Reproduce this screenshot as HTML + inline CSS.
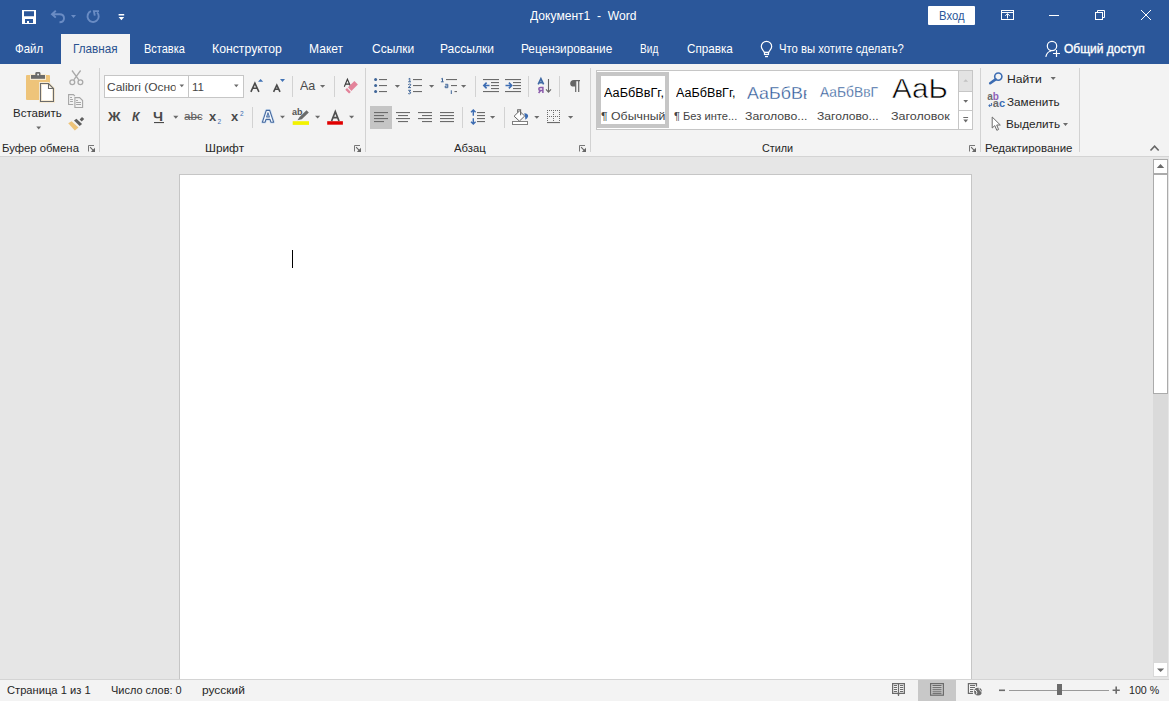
<!DOCTYPE html>
<html><head><meta charset="utf-8">
<style>
*{margin:0;padding:0;box-sizing:border-box}
html,body{width:1169px;height:701px;overflow:hidden;background:#e6e6e6;font-family:"Liberation Sans",sans-serif;position:relative}
.a{position:absolute}
.t{position:absolute;white-space:nowrap;line-height:1;font-size:11.5px;color:#333}
.w{color:#fff}
#ov{position:absolute;left:0;top:0;width:1169px;height:701px}
</style></head><body>
<!-- title bar -->
<div class="a" style="left:0;top:0;width:1169px;height:64px;background:#2b579a"></div>
<div class="a" style="left:61px;top:34px;width:69px;height:30px;background:#f3f3f3"></div>
<!-- ribbon -->
<div class="a" style="left:0;top:64px;width:1169px;height:92px;background:#f3f3f3"></div>
<div class="a" style="left:0;top:156px;width:1169px;height:1px;background:#d4d4d4"></div>
<!-- page -->
<div class="a" style="left:179px;top:174px;width:793px;height:520px;background:#fff;border:1px solid #c6c6c6"></div>
<div class="a" style="left:292px;top:250px;width:1px;height:18px;background:#000"></div>
<!-- scrollbar -->
<div class="a" style="left:1153px;top:394px;width:15px;height:268px;background:#dadada"></div>
<div class="a" style="left:1153px;top:159px;width:15px;height:15px;background:#fff;border:1px solid #ababab"></div>
<div class="a" style="left:1153px;top:174px;width:15px;height:220px;background:#fff;border:1px solid #ababab"></div>
<div class="a" style="left:1153px;top:662px;width:15px;height:15px;background:#fff;border:1px solid #d9d9d9"></div>
<!-- status bar -->
<div class="a" style="left:0;top:679px;width:1169px;height:1px;background:#d4d4d4"></div>
<div class="a" style="left:0;top:680px;width:1169px;height:21px;background:#f3f3f3"></div>
<div class="a" style="left:918px;top:680px;width:38px;height:21px;background:#c8c8c8"></div>

<!-- font boxes -->
<div class="a" style="left:104px;top:75px;width:85px;height:23px;background:#fff;border:1px solid #c6c6c6"></div>
<div class="a" style="left:188px;top:75px;width:56px;height:23px;background:#fff;border:1px solid #c6c6c6"></div>
<!-- align left selected -->
<div class="a" style="left:370px;top:106px;width:22px;height:23px;background:#c5c5c5"></div>
<!-- styles gallery -->
<div class="a" style="left:596px;top:70px;width:377px;height:60px;background:#fff;border:1px solid #c6c6c6"></div>
<div class="a" style="left:597px;top:72px;width:72px;height:56px;border:4px solid #c6c6c6"></div>
<div class="a" style="left:958px;top:71px;width:14px;height:21px;background:#e3e3e3;border-left:1px solid #c6c6c6"></div>
<div class="a" style="left:958px;top:91px;width:14px;height:20px;border-left:1px solid #c6c6c6;border-top:1px solid #c6c6c6"></div>
<div class="a" style="left:958px;top:110px;width:14px;height:19px;border-left:1px solid #c6c6c6;border-top:1px solid #c6c6c6"></div>

<div class="a" style="left:928px;top:6px;width:47px;height:19px;background:#fff;border-radius:1px"></div>
<div id="title" class="t" style="left:529.8px;top:9px;font-size:13px;color:#fff;transform:scaleX(0.9298);transform-origin:0 0">Документ1&nbsp;&nbsp;-&nbsp;&nbsp;Word</div>
<div id="vhod" class="t" style="left:938.65px;top:10px;font-size:12px;color:#2b579a;transform:scaleX(0.9395);transform-origin:0 0">Вход</div>
<div id="tab0" class="t" style="left:15.48px;top:41.5px;font-size:13px;color:#fff;transform:scaleX(0.8788);transform-origin:0 0">Файл</div>
<div id="tab1" class="t" style="left:72.69px;top:41.5px;font-size:13px;color:#29528f;transform:scaleX(0.9002);transform-origin:0 0">Главная</div>
<div id="tab2" class="t" style="left:144.33px;top:41.5px;font-size:13px;color:#fff;transform:scaleX(0.8462);transform-origin:0 0">Вставка</div>
<div id="tab3" class="t" style="left:212.05px;top:41.5px;font-size:13px;color:#fff;transform:scaleX(0.9427);transform-origin:0 0">Конструктор</div>
<div id="tab4" class="t" style="left:309.05px;top:41.5px;font-size:13px;color:#fff;transform:scaleX(0.9282);transform-origin:0 0">Макет</div>
<div id="tab5" class="t" style="left:371.6px;top:41.5px;font-size:13px;color:#fff;transform:scaleX(0.9248);transform-origin:0 0">Ссылки</div>
<div id="tab6" class="t" style="left:440.49px;top:41.5px;font-size:13px;color:#fff;transform:scaleX(0.9232);transform-origin:0 0">Рассылки</div>
<div id="tab7" class="t" style="left:521.29px;top:41.5px;font-size:13px;color:#fff;transform:scaleX(0.9091);transform-origin:0 0">Рецензирование</div>
<div id="tab8" class="t" style="left:640.37px;top:41.5px;font-size:13px;color:#fff;transform:scaleX(0.7775);transform-origin:0 0">Вид</div>
<div id="tab9" class="t" style="left:687.2px;top:41.5px;font-size:13px;color:#fff;transform:scaleX(0.8981);transform-origin:0 0">Справка</div>
<div id="tell" class="t" style="left:778.93px;top:41.5px;font-size:13px;color:#fff;transform:scaleX(0.8685);transform-origin:0 0">Что вы хотите сделать?</div>
<div id="share" class="t" style="left:1064.2px;top:41.5px;font-size:13px;color:#fff;transform:scaleX(0.9234);transform-origin:0 0;-webkit-text-stroke:0.35px #fff">Общий доступ</div>
<div id="g1" class="t" style="left:2.41px;top:143px;font-size:11.5px;color:#262626;transform:scaleX(0.9844);transform-origin:0 0">Буфер обмена</div>
<div id="g2" class="t" style="left:204.96px;top:143px;font-size:11.5px;color:#262626;transform:scaleX(1.0327);transform-origin:0 0">Шрифт</div>
<div id="g3" class="t" style="left:453.6px;top:143px;font-size:11.5px;color:#262626;transform:scaleX(0.9814);transform-origin:0 0">Абзац</div>
<div id="g4" class="t" style="left:761.82px;top:143px;font-size:11.5px;color:#262626;transform:scaleX(0.9400);transform-origin:0 0">Стили</div>
<div id="g5" class="t" style="left:985.41px;top:143px;font-size:11.5px;color:#262626;transform:scaleX(0.9979);transform-origin:0 0">Редактирование</div>
<div id="paste" class="t" style="left:13.4px;top:107.5px;font-size:11.5px;color:#262626;transform:scaleX(1.0003);transform-origin:0 0">Вставить</div>
<div id="find" class="t" style="left:1006.98px;top:74px;font-size:11.5px;color:#262626;transform:scaleX(1.0574);transform-origin:0 0">Найти</div>
<div id="repl" class="t" style="left:1007.0px;top:96.5px;font-size:11.5px;color:#262626;transform:scaleX(1.0195);transform-origin:0 0">Заменить</div>
<div id="sel" class="t" style="left:1005.99px;top:119px;font-size:11.5px;color:#262626;transform:scaleX(1.0195);transform-origin:0 0">Выделить</div>
<div id="fname" class="t" style="left:107px;top:81.5px;font-size:11.5px;color:#444;transform:scaleX(1.0400);transform-origin:0 0;width:65.5px;overflow:hidden">Calibri (Осно</div>
<div id="fsize" class="t" style="left:192px;top:81.5px;font-size:11.5px;color:#444">11</div>
<div id="st1" class="t" style="left:603.5px;top:86.5px;font-size:12.5px;color:#000;transform:scaleX(1.0156);transform-origin:0 0">АаБбВвГг,</div>
<div id="st2" class="t" style="left:676.0px;top:86.5px;font-size:12.5px;color:#000;transform:scaleX(1.0072);transform-origin:0 0">АаБбВвГг,</div>
<div id="st3" class="t" style="left:747px;top:84.5px;font-size:16.5px;color:#2b5797;transform:scaleX(1.0800);transform-origin:0 0;width:54.6px;overflow:hidden;-webkit-text-stroke:0.3px #fff">АаБбВвГг</div>
<div id="st4" class="t" style="left:819.51px;top:85px;font-size:14.5px;color:#2b5797;transform:scaleX(0.9505);transform-origin:0 0;-webkit-text-stroke:0.3px #fff">АаБбВвГ</div>
<div id="st5" class="t" style="left:891.9px;top:75px;font-size:28px;color:#000;transform:scaleX(1.0539);transform-origin:0 0;-webkit-text-stroke:0.6px #fff">АаЬ</div>
<div id="sl1" class="t" style="left:601.16px;top:111px;font-size:11.5px;color:#444;transform:scaleX(1.0695);transform-origin:0 0">¶ Обычный</div>
<div id="sl2" class="t" style="left:673.59px;top:111px;font-size:11.5px;color:#444;transform:scaleX(0.9663);transform-origin:0 0">¶ Без инте...</div>
<div id="sl3" class="t" style="left:744.96px;top:111px;font-size:11.5px;color:#444;transform:scaleX(1.0662);transform-origin:0 0">Заголово...</div>
<div id="sl4" class="t" style="left:816.98px;top:111px;font-size:11.5px;color:#444;transform:scaleX(1.0520);transform-origin:0 0">Заголово...</div>
<div id="sl5" class="t" style="left:890.99px;top:111px;font-size:11.5px;color:#444;transform:scaleX(1.0856);transform-origin:0 0">Заголовок</div>
<div id="s1" class="t" style="left:7.0px;top:685px;font-size:11.5px;color:#262626;transform:scaleX(0.9699);transform-origin:0 0">Страница 1 из 1</div>
<div id="s2" class="t" style="left:111.26px;top:685px;font-size:11.5px;color:#262626;transform:scaleX(0.9537);transform-origin:0 0">Число слов: 0</div>
<div id="s3" class="t" style="left:202.16px;top:685px;font-size:11.5px;color:#262626;transform:scaleX(1.0400);transform-origin:0 0">русский</div>
<div id="s4" class="t" style="left:1129.48px;top:685px;font-size:11.5px;color:#262626;transform:scaleX(0.9263);transform-origin:0 0">100 %</div>
<div id="bold" class="t" style="left:108.4px;top:109.5px;font-size:13px;color:#4a4a4a;font-weight:bold;transform:scaleX(1.0705);transform-origin:0 0">Ж</div>
<div id="ital" class="t" style="left:131.61px;top:109.5px;font-size:13px;color:#4a4a4a;font-weight:bold;font-style:italic;transform:scaleX(0.9421);transform-origin:0 0">К</div>
<div id="und" class="t" style="left:153.49px;top:109.5px;font-size:13px;color:#4a4a4a;font-weight:bold;transform:scaleX(1.0999);transform-origin:0 0">Ч</div>
<div id="abc" class="t" style="left:183.98px;top:111px;font-size:11px;color:#5a5a5a;transform:scaleX(1.0563);transform-origin:0 0">abc</div>
<div id="sub" class="t" style="left:209px;top:109.5px;font-size:13px;color:#4a4a4a;font-weight:bold">x</div>
<div id="sub2" class="t" style="left:217.5px;top:118.5px;font-size:6.5px;color:#3c6cb2">2</div>
<div id="sup" class="t" style="left:231px;top:109.5px;font-size:13px;color:#4a4a4a;font-weight:bold">x</div>
<div id="sup2" class="t" style="left:240px;top:110.5px;font-size:6.5px;color:#3c6cb2">2</div>
<div id="aa" class="t" style="left:300.0px;top:79px;font-size:13px;color:#4a4a4a;transform:scaleX(0.9649);transform-origin:0 0">Aa</div>
<div id="hab" class="t" style="left:292px;top:108px;font-size:9px;color:#555;font-weight:bold">ab</div>
<div id="rab" class="t" style="left:987.3px;top:92px;font-size:10px;color:#6b6b6b;font-weight:bold">a<span style="color:#8e5fb8">b</span></div>
<div id="rac" class="t" style="left:992.8px;top:98.3px;font-size:11px;color:#6b6b6b;font-weight:bold">a<span style="color:#3c6cb2">c</span></div>
<svg id="ov" width="1169" height="701" viewBox="0 0 1169 701">
<!-- QAT -->
<path fill="#fff" fill-rule="evenodd" d="M22,10h14v14h-14z M24,11.3h10v5h-10z M25,19h8v4h-4v-2h-2v2h-2z"/>
<g stroke="#6a8cc4" stroke-width="1.9" fill="none">
<path d="M55.8,10.8 L52,14.2 L55.8,17.6 M52.2,14.2 H59.5 C62.6,14.2 64,16 64,18.3 C64,20.6 62.4,22.3 59.5,22.3"/>
<path d="M90.9,11.2 A5.6,5.6 0 1 0 97.1,12.4"/>
<path d="M99,11.1 H93.9 L94.8,15.6"/>
</g>
<path fill="#6a8cc4" d="M71,15h5l-2.5,3z"/>
<path fill="#fff" d="M118.6,14.1h5.6v1.3h-5.6z M118.6,17.1h5.6l-2.8,3.1z"/>
<!-- window controls -->
<g stroke="#fff" stroke-width="1" fill="none">
<rect x="1001.5" y="10.5" width="12" height="9"/>
<path d="M1002,12.5H1013 M1007.5,18.5V13.8 M1005.3,15.8L1007.5,13.6L1009.7,15.8"/>
<path d="M1049,15.5H1059"/>
<rect x="1095.5" y="12.5" width="7" height="7"/>
<path d="M1097.5,12V10.5H1104.5V17.5H1103"/>
<path d="M1141,10L1151,20M1151,10L1141,20"/>
</g>
<!-- tell me bulb -->
<g stroke="#fff" stroke-width="1.2" fill="none">
<path d="M764.3,52.3 C763.3,50.3 761.3,49 761.3,46.5 A5.2,5.2 0 0 1 771.7,46.5 C771.7,49 769.7,50.3 768.7,52.3 Z"/>
<rect x="764.5" y="52.5" width="4" height="2"/>
<path d="M765,56.6H768"/>
<circle cx="1052" cy="46" r="4.7"/>
<path d="M1045.8,56.8 C1046.6,53.2 1049,51.3 1051.2,51"/>
<path d="M1053,53.5H1060 M1056.5,50V57"/>
</g>
<!-- paste -->
<rect x="26" y="75" width="24" height="25" rx="1" fill="#eec47a"/>
<rect x="30" y="74" width="16" height="6" fill="#f7ebd3"/>
<rect x="31" y="75" width="14" height="3.8" fill="#6b6b6b"/>
<rect x="35.3" y="72" width="5.2" height="4" rx="1.4" fill="#6b6b6b"/>
<rect x="37.3" y="73.7" width="1.6" height="1.6" fill="#fff"/>
<path d="M40.5,83.5 H48.5 L53.5,88.5 V101.5 H40.5 Z" fill="#fff" stroke="#f7ebd3" stroke-width="3"/>
<path d="M40.5,83.5 H48.5 L53.5,88.5 V101.5 H40.5 Z M48.5,83.5 V88.5 H53.5" fill="none" stroke="#6b6b6b" stroke-width="1.1"/>
<path fill="#6b6b6b" d="M36.3,126.6h4.8l-2.4,3z"/>
<!-- scissors -->
<g stroke="#a9a9a9" stroke-width="1.3" fill="none">
<circle cx="72.3" cy="82.2" r="2.4"/><circle cx="80.4" cy="82.2" r="2.4"/>
<path d="M72,70.5 L78.8,79.9 M80.6,70.5 L73.8,79.9"/>
</g>
<!-- copy -->
<g stroke="#a6a6a6" stroke-width="1.1" fill="none">
<path d="M73.2,104.5 H68.6 V94.6 H73.4 L74.9,96.1"/>
<path d="M70.1,97.5H72 M70.1,99.5H72.9 M70.1,101.5H72.9"/>
<path d="M74.9,107.5 V97.6 H79.6 L82.6,100.6 V107.5 Z"/>
<path d="M76.1,100.5H77.9 M76.1,102.5H81 M76.1,104.5H81"/>
</g>
<!-- brush -->
<path d="M79.6,119.4 L82,117 L84.2,118.9 L81.7,121.4 Z" fill="#5f5f5f"/>
<path d="M74,120.5 L76.4,118.8 L82.1,123.9 L79.7,125.9 Z" fill="#5f5f5f"/>
<path d="M68.2,123.2 L71.6,121.3 L78.5,127.4 L74.8,130.4 Z" fill="#eec47a"/>
<!-- font boxes arrows -->
<path fill="#6b6b6b" d="M179.5,84.5h4.6l-2.3,2.8z M234,84.5h4.6l-2.3,2.8z"/>
<!-- grow/shrink -->
<path fill="#4273b5" d="M258,81.8h5.2l-2.6,-2.9z M280,79h5l-2.5,2.9z"/>
<g stroke="#4a4a4a" stroke-width="1.6" fill="none">
<path d="M250.9,91.8 L254.9,83.2 L258.9,91.8 M252.5,88.2 H257.3"/>
<path d="M273.6,91.8 L276.8,85.2 L280,91.8 M274.9,89.2 H278.7"/>
</g>
<path fill="#6b6b6b" d="M320,85h5.2l-2.6,2.8z"/>
<!-- separators -->
<g fill="#d2d2d2">
<rect x="99" y="68" width="1" height="84"/>
<rect x="365" y="68" width="1" height="84"/>
<rect x="590" y="68" width="1" height="84"/>
<rect x="980" y="68" width="1" height="84"/>
<rect x="1079" y="68" width="1" height="84"/>
<rect x="292" y="76" width="1" height="21"/>
<rect x="334" y="76" width="1" height="21"/>
<rect x="252" y="107" width="1" height="21"/>
<rect x="475" y="76" width="1" height="21"/>
<rect x="528" y="76" width="1" height="21"/>
<rect x="559" y="76" width="1" height="21"/>
<rect x="462" y="107" width="1" height="21"/>
<rect x="504" y="107" width="1" height="21"/>
</g>
<!-- dialog launchers -->
<path d="M88.5,151.5 V145.5 H94.0" stroke="#777" stroke-width="1" fill="none"/>
<path d="M90.1,147.2 L93.7,150.8" stroke="#666" stroke-width="1.1"/>
<path d="M95.0,147.8 V152 H90.8 Z" fill="#666"/>
<path d="M354.5,151.5 V145.5 H360.0" stroke="#777" stroke-width="1" fill="none"/>
<path d="M356.1,147.2 L359.7,150.8" stroke="#666" stroke-width="1.1"/>
<path d="M361.0,147.8 V152 H356.8 Z" fill="#666"/>
<path d="M579.5,151.5 V145.5 H585.0" stroke="#777" stroke-width="1" fill="none"/>
<path d="M581.1,147.2 L584.7,150.8" stroke="#666" stroke-width="1.1"/>
<path d="M586.0,147.8 V152 H581.8 Z" fill="#666"/>
<path d="M969.5,151.5 V145.5 H975.0" stroke="#777" stroke-width="1" fill="none"/>
<path d="M971.1,147.2 L974.7,150.8" stroke="#666" stroke-width="1.1"/>
<path d="M976.0,147.8 V152 H971.8 Z" fill="#666"/>
<!-- row2 font -->
<path fill="#6b6b6b" d="M173.2,115.8h5.2l-2.6,2.9z M280,115.8h5l-2.5,2.8z M315,115.8h5.2l-2.6,2.8z M349,115.8h5.2l-2.6,2.8z"/>
<rect x="154" y="122" width="10" height="1.1" fill="#4a4a4a"/>
<path d="M185,117.4H201.5" stroke="#5a5a5a" stroke-width="1"/>
<!-- text effects A -->
<path d="M262.4,122.2 L266.3,110.4 H269.7 L273.6,122.2 H270.9 L270,119.4 H266 L265.1,122.2 Z M266.7,117 H269.3 L268,112.8 Z" fill="none" stroke="#cfe0f3" stroke-width="2.6" stroke-linejoin="round"/>
<path d="M262.4,122.2 L266.3,110.4 H269.7 L273.6,122.2 H270.9 L270,119.4 H266 L265.1,122.2 Z M266.7,117 H269.3 L268,112.8 Z" fill="#f4f8fd" fill-rule="evenodd" stroke="#44679c" stroke-width="1.1" stroke-linejoin="round"/>
<path d="M266.9,116.6 H269.1 L268,113.3 Z" fill="#7d9fcc"/>
<!-- highlighter -->
<rect x="292.7" y="121.2" width="16.3" height="3.7" fill="#f2f200"/>
<path d="M297.5,120.3 L299.5,117 L306.5,110.3 L308.8,112.5 L301.8,119.3 Z" fill="#6b6b6b"/>
<!-- font color -->
<rect x="327.2" y="121.2" width="15.7" height="3.5" fill="#e00000"/>
<path d="M331.6,121 L335.3,111.6 L339,121 M332.9,117.6 H337.7" stroke="#505050" stroke-width="1.7" fill="none"/>
<!-- eraser -->
<path d="M344.3,86.7 L347.4,79.2 L350.4,86 M345.6,84.1 H349.4" stroke="#3a3a3a" stroke-width="1.1" fill="none"/>
<path d="M348,87.2 L354.4,81 L357.9,84.6 L351.4,90.9 Z" fill="#e3839a"/>
<path d="M345.3,89.8 L347,88.1 L350.8,91.9 L349.1,93.6 Z" fill="#e3839a"/>
<!-- bullets -->
<g fill="#3f6598">
<circle cx="375.6" cy="79.6" r="1.5"/><circle cx="375.6" cy="85.4" r="1.5"/><circle cx="375.6" cy="91.5" r="1.5"/>
</g>
<g fill="#6b6b6b">
<rect x="379" y="79" width="8" height="1.1"/><rect x="379" y="85" width="8" height="1.1"/><rect x="379" y="91" width="8" height="1.1"/>
<rect x="413" y="79" width="9" height="1.1"/><rect x="413" y="85" width="9" height="1.1"/><rect x="413" y="91" width="9" height="1.1"/>
<rect x="446" y="79" width="11" height="1.1"/><rect x="451" y="85" width="6" height="1.1"/><rect x="454.5" y="91" width="2.5" height="1.1"/>
</g>
<path fill="#6b6b6b" d="M394.8,85h5.2l-2.6,2.8z M429,85h5.2l-2.6,2.8z M461,85h5.2l-2.6,2.8z"/>
<g stroke="#3f6598" stroke-width="1" fill="none">
<path d="M408.5,79 L409.8,78.3 V81.8 M408.2,81.8H411"/>
<path d="M408.2,84.6 Q409.6,83.6 410.8,84.4 Q411,85.3 408.2,87.6 H411"/>
<path d="M408.2,90.3 H410.8 L409.2,91.8 Q411,92 410.8,93 Q410,94.3 408.2,93.6"/>
<path d="M441.2,79 L442.5,78.3 V81.8 M440.9,81.8H443.7"/>
<path d="M445.2,84.3 H447.8 V87.7 H445.2 V86 H447.8"/>
<path d="M451.3,90.3 V94"/>
</g>
<!-- align -->
<g fill="#6b6b6b">
<rect x="374" y="112" width="14" height="1.1"/><rect x="374" y="115" width="10" height="1.1"/><rect x="374" y="118" width="14" height="1.1"/><rect x="374" y="121" width="10" height="1.1"/>
<rect x="396" y="112" width="14" height="1.1"/><rect x="398" y="115" width="10" height="1.1"/><rect x="396" y="118" width="14" height="1.1"/><rect x="398" y="121" width="10" height="1.1"/>
<rect x="418" y="112" width="14" height="1.1"/><rect x="422" y="115" width="10" height="1.1"/><rect x="418" y="118" width="14" height="1.1"/><rect x="422" y="121" width="10" height="1.1"/>
<rect x="440" y="112" width="14" height="1.1"/><rect x="440" y="115" width="14" height="1.1"/><rect x="440" y="118" width="14" height="1.1"/><rect x="440" y="121" width="14" height="1.1"/>
</g>
<!-- indent -->
<g fill="#6b6b6b">
<rect x="483" y="79" width="16" height="1.1"/><rect x="491" y="82" width="8" height="1.1"/><rect x="491" y="85" width="8" height="1.1"/><rect x="491" y="88" width="8" height="1.1"/><rect x="483" y="91" width="16" height="1.1"/>
<rect x="505" y="79" width="16" height="1.1"/><rect x="513" y="82" width="8" height="1.1"/><rect x="513" y="85" width="8" height="1.1"/><rect x="513" y="88" width="8" height="1.1"/><rect x="505" y="91" width="16" height="1.1"/>
</g>
<g stroke="#3c6cb2" stroke-width="1.6" fill="none">
<path d="M484,85.5 H489.5 M486.6,82.6 L483.8,85.5 L486.6,88.4"/>
<path d="M505.5,85.5 H511.5 M508.9,82.6 L511.7,85.5 L508.9,88.4"/>
</g>
<!-- sort -->
<path d="M538.2,84.4 L540.9,78.6 L543.6,84.4 M539.2,82.6 H542.6" stroke="#3d68a3" stroke-width="1.6" fill="none"/>
<path d="M542.9,93 V87.6 H540.6 Q538.8,87.6 538.8,89 Q538.8,90.5 540.6,90.5 H542.9 M540.6,90.5 L538.6,93" stroke="#8a5aab" stroke-width="1.5" fill="none"/>
<path d="M548.5,79 V92 M546,89.4 L548.5,92.2 L551,89.4" stroke="#666" stroke-width="1.1" fill="none"/>
<!-- pilcrow -->
<path d="M574.5,80.6 H580 M575.7,80.6 V92 M578.7,80.6 V92" stroke="#666" stroke-width="1.2" fill="none"/>
<path d="M575.6,80 H573.8 Q570.2,80.2 570.2,83.4 Q570.2,86.6 573.8,86.6 H575.6 Z" fill="#666"/>
<!-- line spacing -->
<path d="M473.3,110 V115.8 M473.3,118.2 V124 M471,112.3 L473.3,110 L475.6,112.3 M471,121.7 L473.3,124 L475.6,121.7" stroke="#3c6cb2" stroke-width="1.4" fill="none"/>
<g fill="#6b6b6b">
<rect x="477" y="112" width="8" height="1.1"/><rect x="477" y="115" width="8" height="1.1"/><rect x="477" y="118" width="8" height="1.1"/><rect x="477" y="121" width="8" height="1.1"/>
</g>
<path fill="#6b6b6b" d="M490,116h5.2l-2.6,2.8z M534.2,116h5.2l-2.6,2.8z M568,116h5.2l-2.6,2.8z"/>
<!-- shading -->
<rect x="512.5" y="121.5" width="15" height="3" fill="#fff" stroke="#808080" stroke-width="1"/>
<path d="M514.1,116.2 L519.4,111 L524.7,116 L519.4,121.1 Z" fill="#fff" stroke="#666" stroke-width="1"/>
<path d="M517.7,112.4 V109.7 H520.6 V115.3" stroke="#666" stroke-width="1.1" fill="none"/>
<path d="M524.2,113.3 Q528.6,113.6 528.1,116.6 Q527.6,118.6 525.4,119.8 L525,116 Z" fill="#3c6cb2"/>
<!-- borders -->
<g fill="#6b6b6b">
<rect x="547" y="122" width="13" height="1.1"/>
</g>
<g stroke="#6b6b6b" stroke-width="1" stroke-dasharray="1,1" fill="none">
<path d="M547.5,110 V121 M553.5,110 V121 M559.5,110 V121 M547,110.5 H560 M547,116.5 H560"/>
</g>
<!-- gallery scroll -->
<path fill="#c2c2c2" d="M963.3,81.8h4.8l-2.4,-2.6z"/>
<path fill="#6b6b6b" d="M963.3,100h4.8l-2.4,2.7z M963.3,119.6h4.8l-2.4,2.8z"/>
<rect x="963.3" y="117" width="4.8" height="1" fill="#6b6b6b"/>
<!-- find -->
<circle cx="998.3" cy="76.6" r="3.6" fill="none" stroke="#3c6cb2" stroke-width="1.6"/>
<path d="M995.6,79.4 L990.2,83.2" stroke="#3c6cb2" stroke-width="2.6" stroke-linecap="round"/>
<path fill="#6b6b6b" d="M1050.6,77h5.2l-2.6,3z M1063,123h5l-2.5,3z"/>
<path d="M991.6,103 V105.6 H988.9 M990.2,104.3 L988.7,105.6 L990.2,106.9" stroke="#3c6cb2" stroke-width="1" fill="none"/>
<!-- cursor -->
<path d="M992.2,117 V128 L994.8,125.6 L996.8,130.3 L998.6,129.5 L996.7,125 H1000.3 Z" fill="#fff" stroke="#6b6b6b" stroke-width="1" stroke-linejoin="round"/>
<!-- collapse caret -->
<path d="M1150.5,150.5 L1154.6,146.2 L1158.7,150.5" stroke="#666" stroke-width="1.6" fill="none"/>
<!-- scrollbar arrows -->
<path fill="#6b6b6b" d="M1156.8,168h7.4l-3.7,-4z M1157,668.5h7.2l-3.6,3.4z"/>
<!-- status icons -->
<g stroke="#6b6b6b" stroke-width="1.2" fill="none">
<path d="M892.6,683.6 H904.4 V693.4 H899.2 L898.5,694.6 L897.8,693.4 H892.6 Z M898.5,683.6 V696"/>
<path d="M893.8,685.5H897 M893.8,687.5H897 M893.8,689.5H897 M893.8,691.5H897 M900,685.5H903.2 M900,687.5H903.2 M900,689.5H903.2 M900,691.5H903.2" stroke-width="1"/>
<rect x="930.6" y="683.6" width="12.8" height="11.6"/>
<path d="M932.5,685.5H941.5 M932.5,687.6H941.5 M932.5,689.7H941.5 M932.5,691.8H941.5 M932.5,693.6H941.5" stroke-width="1"/>
<path d="M976.5,686.5 V683.6 H968.4 V693.4 H973"/>
<path d="M970,685.5H975 M970,687.5H975 M970,689.5H973.5 M970,691.5H973" stroke-width="1"/>
</g>
<circle cx="978" cy="691.6" r="4.8" fill="#f3f3f3"/><circle cx="978" cy="691.6" r="3.9" fill="#6b6b6b"/>
<path d="M974.6,690.2 Q976.5,690.2 976.8,692.2 Q977,694 975.6,694.6 M979.2,687.9 Q978.6,689.8 980.2,690.5 Q981.6,691.2 981.6,692.5" stroke="#f3f3f3" stroke-width="1" fill="none"/>
<rect x="999" y="689.5" width="6" height="1.6" fill="#6b6b6b"/>
<rect x="1009" y="690" width="100" height="1" fill="#9a9a9a"/>
<rect x="1057" y="684" width="5" height="11" fill="#6b6b6b"/>
<path d="M1112.6,690.2 H1119.8 M1116.2,686.6 V693.8" stroke="#6b6b6b" stroke-width="1.6"/>
</svg>
</body></html>
